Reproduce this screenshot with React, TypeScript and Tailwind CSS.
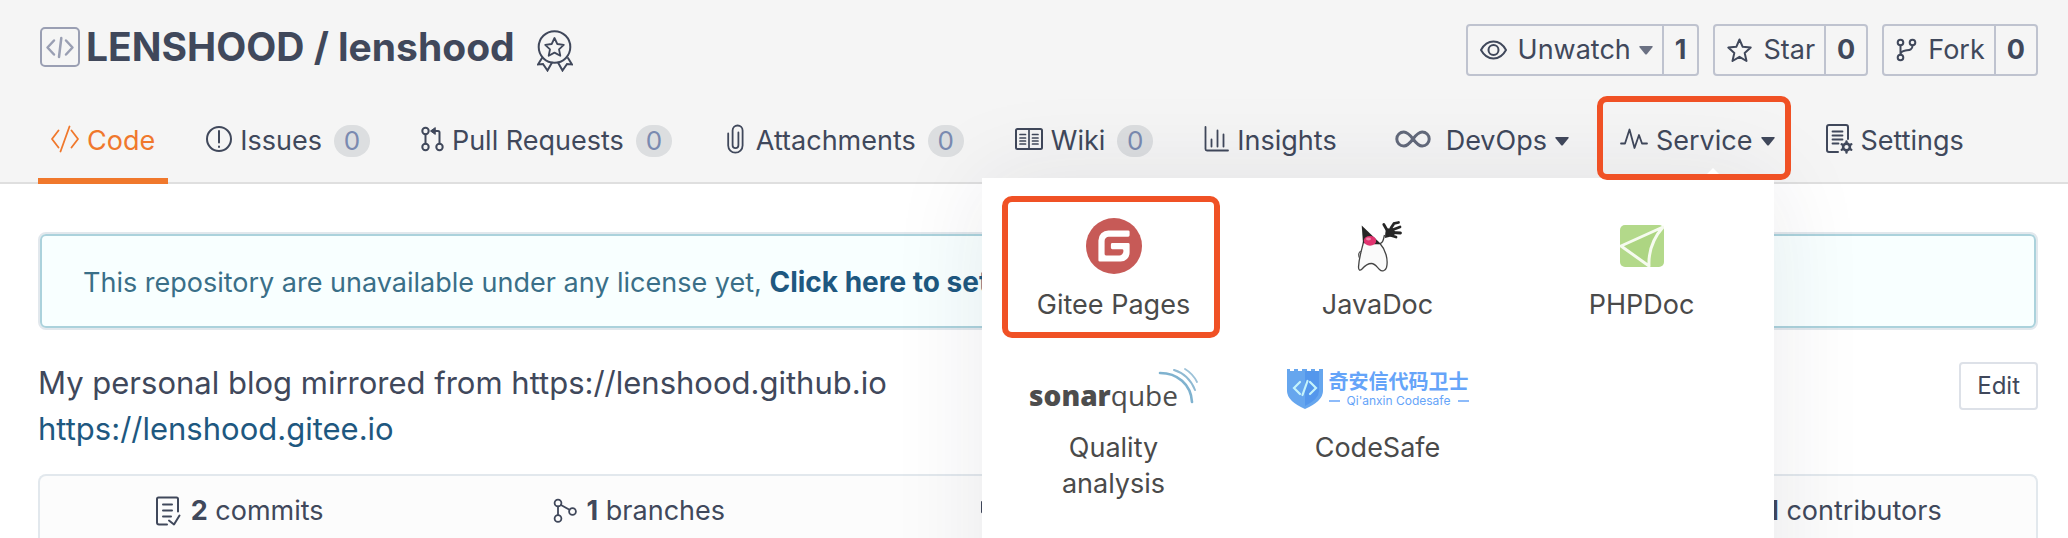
import type { ReactNode } from "react";

type DrawingProps = {
  w: number;
  h: number;
  stroke?: number;
  className?: string;
  children: ReactNode;
};

function Drawing({ w, h, stroke = 2, className = "", children }: DrawingProps) {
  return (
    <svg
      width={w}
      height={h}
      viewBox={`0 0 ${w} ${h}`}
      fill="none"
      stroke="currentColor"
      strokeWidth={stroke}
      strokeLinecap="round"
      strokeLinejoin="round"
      aria-hidden="true"
      className={`shrink-0 ${className}`}
    >
      {children}
    </svg>
  );
}

const RepoIcon = () => (
  <Drawing w={40} h={40} className="text-[#9a9fb3]">
    <rect x="1" y="1" width="38" height="38" rx="4" />
    <path d="M14 13.5 7.500 20.500l6.500 7M26 13.500l6.500 7-6.500 7" strokeWidth="2.500" />
    <path d="M21.300 11 19 30" strokeWidth="2.500" />
  </Drawing>
);

const MedalIcon = () => (
  <Drawing w={36} h={42} stroke={2}>
    <circle cx="17.500" cy="17" r="15.800" />
    <path d="m17.500 8 2.800 6 6.500.8-4.800 4.500 1.300 6.500-5.800-3.200-5.800 3.200 1.300-6.500-4.800-4.500 6.500-.8Z" strokeWidth="1.800" />
    <path d="m5 28-4 6.500 5-.5 4.500 6.500 4.500-8M31 28l4 6.500-5-.5-4.500 6.500-4.500-8" strokeLinejoin="miter" />
  </Drawing>
);

const CodeIcon = () => (
  <Drawing w={28} h={28} stroke={1.8}>
    <path d="M7.500 5.500 1 14l6.500 8.500M20.500 5.500 27 14l-6.500 8.500M18.500 1.500 9.500 26.500" />
  </Drawing>
);

const IssueIcon = () => (
  <Drawing w={26} h={28}>
    <circle cx="13" cy="14" r="12" />
    <path d="M13 6v11.500" />
    <path d="M13 21.500v.5" />
  </Drawing>
);

const PullIcon = () => (
  <Drawing w={23} h={26}>
    <circle cx="4.500" cy="5" r="3.200" />
    <circle cx="4.500" cy="21" r="3.200" />
    <circle cx="18.500" cy="21" r="3.200" />
    <path d="M4.500 8.500v9M18.500 17.500V6.500q0-1.500-1.500-1.500H11" />
    <path d="m14 1.800-4.500 3.200 4.500 3.200Z" fill="currentColor" strokeWidth="1" />
  </Drawing>
);

const ClipIcon = () => (
  <Drawing w={17} h={30} stroke={1.8} className="mx-1">
    <path d="M1.200 9.500v12a7.200 7.200 0 0 0 14.400 0V6.500a5 5 0 0 0-10 0v14.800a2.900 2.900 0 0 0 5.800 0V8.500" />
  </Drawing>
);

const WikiIcon = () => (
  <Drawing w={28} h={22} stroke={2}>
    <rect x="1" y="1" width="26" height="20" rx="1.500" />
    <path d="M14 1.500v19M5 6.500h5.500M5 10h5.500M5 13h5.500M5 16h5.500M17.500 6.500H23M17.500 10H23M17.500 13H23M17.500 16H23" strokeWidth="1.700" />
  </Drawing>
);

const InsightsIcon = () => (
  <Drawing w={25} h={26} stroke={1.8}>
    <path d="M1.500 1v22q0 1.500 1.500 1.500h21M7.500 13.500v7M13.500 4.500v16M19.500 8.500v12" />
  </Drawing>
);

const InfinityIcon = () => (
  <Drawing w={36} h={18} stroke={3} className="mx-[7px] text-[#636a7b]">
    <path d="M18 9C15 5 12.500 2 8.800 2a7 7 0 0 0 0 14c3.700 0 6.200-3 9.200-7s5.500-7 9.200-7a7 7 0 0 1 0 14C23.500 16 21 13 18 9Z" />
  </Drawing>
);

const PulseIcon = () => (
  <Drawing w={28} h={22} stroke={1.8}>
    <path d="M1 15.500h4L9.500 1.500l5 18.500L19 7l3 8.500h5" />
  </Drawing>
);

const SettingsIcon = () => (
  <Drawing w={27} h={30} stroke={2}>
    <path d="M12 28H3q-2 0-2-2V3q0-2 2-2h17q2 0 2 2v12" />
    <path d="M6.500 7.500h10M6.500 11.500h10M6.500 15.500h10M6.500 19.500h6" strokeWidth="1.800" />
    <circle cx="20.500" cy="23" r="3.400" strokeWidth="2.600" />
    <path d="M20.500 17.500v1.500M20.500 27v1.500M15.700 20.300l1.500.8M23.800 24.900l1.500.8M15.700 25.700l1.500-.8M23.800 21.100l1.500-.8" strokeWidth="2.400" />
  </Drawing>
);

const EyeIcon = () => (
  <Drawing w={27} h={20}>
    <path d="M1 10C4 4.500 8.500 1.500 13.500 1.500S23 4.500 26 10c-3 5.500-7.500 8.500-12.500 8.500S4 15.500 1 10Z" />
    <circle cx="13.500" cy="10" r="5" />
  </Drawing>
);

const StarIcon = () => (
  <Drawing w={25} h={25}>
    <path d="m12.500 1.500 3.200 7.300 8 .8-6 5.400 1.800 8-7-4.200-7 4.200 1.800-8-6-5.400 8-.8Z" />
  </Drawing>
);

const ForkIcon = () => (
  <Drawing w={21} h={24}>
    <circle cx="4.500" cy="4.500" r="2.800" />
    <circle cx="4.500" cy="19.500" r="2.800" />
    <circle cx="16.500" cy="4.500" r="2.800" />
    <path d="M4.500 7.500v9M16.500 7.500c0 5-4 4.500-7 5s-5 1.500-5 4" />
  </Drawing>
);

const CommitsIcon = () => (
  <Drawing w={25} h={30}>
    <path d="M11 28.500H3q-2 0-2-2V3q0-1.500 1.500-1.500h18Q22 1.500 22 3v12.500" />
    <path d="M7 8.500h9M7 14.500h9M7 20.500h8" />
    <path d="m13 24.500 5 4 5.500-9" />
  </Drawing>
);

const BranchesIcon = () => (
  <Drawing w={24} h={26} stroke={1.8}>
    <circle cx="5" cy="5" r="3.400" />
    <circle cx="5" cy="20.500" r="3.400" />
    <circle cx="19.500" cy="13.500" r="3.400" />
    <path d="M5 8.500v8.500M8 7l8.500 4.800" />
  </Drawing>
);

const TagIcon = () => (
  <Drawing w={24} h={24}>
    <path d="M1 3v10l11 10 10-10L12 3Z" />
    <circle cx="7" cy="8" r="2" />
  </Drawing>
);

const PeopleIcon = () => (
  <Drawing w={26} h={24}>
    <circle cx="13" cy="7" r="5" />
    <path d="M2 23c0-6 5-9 11-9s11 3 11 9" />
  </Drawing>
);

function Caret({ className = "" }: { className?: string }) {
  return (
    <svg width="14" height="9" viewBox="0 0 14 9" aria-hidden="true" className={`shrink-0 ${className}`}>
      <path d="M1 0h12q1.200.3.500 1.300L7.800 8.200q-.8.700-1.600 0L.5 1.300Q-.2.300 1 0Z" fill="currentColor" />
    </svg>
  );
}

const GiteeLogo = () => (
  <svg width="56" height="56" viewBox="0 0 56 56" aria-hidden="true">
    <circle cx="28" cy="28" r="28" fill="#c75a57" />
    <path
      fill="#fff"
      d="M42.200 12.400H22.400a10 10 0 0 0-10 10v19.800q0 1.400 1.400 1.400h20.800a9 9 0 0 0 9-9v-8.200q0-1.400-1.400-1.400H26.300q-1.400 0-1.400 1.400v3.400q0 1.400 1.400 1.400h9.700q1.400 0 1.400 1.400v.7a4.200 4.200 0 0 1-4.200 4.200H20q-1.400 0-1.400-1.400V22.900a4.200 4.200 0 0 1 4.200-4.200h19.400q1.400 0 1.400-1.400v-3.500q0-1.400-1.400-1.400Z"
    />
  </svg>
);

const DukeLogo = () => (
  <svg width="48" height="52" viewBox="0 0 48 52" aria-hidden="true">
    <path d="M9.500 22C8 29 5 37 4.500 47c0 3.500 1.500 4 3.500 2 3-3.500 6-5.500 9.500-5.500s5 3 8 6c2.500 2.500 6 1.500 7-2 2-8-1-18-6.500-24Z" fill="#fafafa" stroke="#444" strokeWidth="1.300" />
    <path d="M7.700 5.500 27 24q-9 1-18-1Z" fill="#262626" />
    <path d="M7.500 31c-3 .5-3.500 4-2 7" fill="none" stroke="#555" strokeWidth="1.200" />
    <path d="M26.500 23c2 0 2.500-2 3-4l1-4" fill="none" stroke="#444" strokeWidth="1.300" />
    <ellipse cx="16" cy="20.800" rx="6.200" ry="4.900" fill="#e0336f" />
    <ellipse cx="14.500" cy="19" rx="2.500" ry="1.400" fill="#f283a8" />
    <path
      d="M33 10 29.800 4.500M37 8l3-4.500 4.500-1M38 10l8-3M38 12.500l8.500.5M37 15.500l5 1.500"
      fill="none"
      stroke="#262626"
      strokeWidth="2.800"
      strokeLinecap="round"
    />
    <path d="M32 9q5-2 8 1t-1 6q-4 1-8 2 0-5 1-9Z" fill="#262626" />
  </svg>
);

const PhpDocLogo = () => (
  <svg width="44" height="42" viewBox="0 0 44 42" aria-hidden="true">
    <rect width="44" height="42" rx="5" fill="#b3d98a" />
    <path d="M43 2 1 21l28 20q-1-22 14-39Z" fill="#add582" stroke="#f6fbef" strokeWidth="3" strokeLinejoin="round" />
  </svg>
);

const SonarLogo = () => (
  <span className="relative flex items-center pr-5 text-[#4d4d4d]">
    <span className="pt-3 font-['Open_Sans',sans-serif] text-[28px] leading-8">
      <b className="font-extrabold">sonar</b>qube
    </span>
    <svg width="40" height="40" viewBox="0 0 40 40" fill="none" strokeLinecap="round" aria-hidden="true" className="absolute right-0 bottom-1">
      <path d="M2 6c17 0 31 11 32 29" stroke="#7fb2cf" strokeWidth="2.600" />
      <path d="M16 3c10 3 17 10 21 20" stroke="#8fb9d2" strokeWidth="2" />
      <path d="M27 2c5 3 9 7 12 13" stroke="#9dc2d8" strokeWidth="1.800" />
    </svg>
  </span>
);

const CodeSafeLogo = () => (
  <span className="flex items-center gap-[6px] text-[#65a4f9]">
    <svg width="36" height="40" viewBox="0 0 36 40" aria-hidden="true">
      <path d="M0 0h3v2h4V0h4v2h4V0h5v2h4V0h4v2h4V0h4v22q0 10-18 18Q0 32 0 22Z" fill="#66a6ee" />
      <path d="M18 2h14v20q0 8-14 15Z" fill="#5497ec" />
      <path d="m13 13-6 6 6 6M23 13l6 6-6 6M20.500 12l-5 14" fill="none" stroke="#c5f3fb" strokeWidth="2.200" strokeLinecap="round" />
    </svg>
    <span className="flex flex-col">
      <span className="font-['Noto_Sans_CJK_SC',sans-serif] text-[20px] font-bold leading-6">奇安信代码卫士</span>
      <span className="flex items-center justify-between text-[12px] leading-4">
        <span className="h-[2px] w-[11px] bg-[#8dbbfa]" />
        Qi'anxin Codesafe
        <span className="h-[2px] w-[11px] bg-[#8dbbfa]" />
      </span>
    </span>
  </span>
);

function CountButton({ icon, label, count, caret }: { icon: ReactNode; label: string; count: number; caret?: boolean }) {
  return (
    <div className="flex h-[52px] rounded-[4px] border-2 border-[#bfc3cf] text-[27px] leading-9">
      <button type="button" className="flex items-center gap-[11px] pr-[9px] pl-3">
        {icon}
        <span className="flex items-center gap-2">
          {label}
          {caret && <Caret className="text-[#6b7183]" />}
        </span>
      </button>
      <a href="#count" className="flex items-center border-l-2 border-[#bfc3cf] px-[11px] font-bold">
        {count}
      </a>
    </div>
  );
}

type TabProps = { icon: ReactNode; label: string; count?: number; caret?: boolean; active?: boolean };

function TabLink({ icon, label, count, caret, active }: TabProps) {
  const tone = active ? "border-[#f0782c] text-[#f0782c]" : "border-transparent";
  return (
    <a href={`#${label}`} className={`flex border-b-[6px] px-[13px] pt-[27px] pb-[19px] ${tone}`}>
      <span className="flex h-9 items-center gap-2 whitespace-nowrap">
        <span className="-mt-1">{icon}</span>
        {label}
        {caret && <Caret />}
        {count !== undefined && (
          <span className="ml-1 flex h-8 w-9 items-center justify-center rounded-full bg-[#dcdee0] text-[26px] text-[#7a8ab0]">
            {count}
          </span>
        )}
      </span>
    </a>
  );
}

function Service({ logo, label, marked }: { logo: ReactNode; label: string; marked?: boolean }) {
  return (
    <a href={`#${label}`} className="relative flex flex-col items-center gap-[13px] px-10 text-center">
      <span className="flex h-14 items-center justify-center">{logo}</span>
      <span>{label}</span>
      {marked && <span className="absolute -top-[22px] right-[26px] -bottom-[15px] left-5 rounded-[10px] border-[6px] border-[#f05125]" />}
    </a>
  );
}

function ServiceMenu() {
  return (
    <div className="absolute top-full right-[14px] grid h-[480px] w-[792px] grid-cols-3 content-start gap-y-[38px] bg-white pt-10 text-[27px] leading-9 text-[#4a4a4a] shadow-[0_0_90px_rgba(30,34,60,0.09)]">
      <Service logo={<GiteeLogo />} label="Gitee Pages" marked />
      <Service logo={<DukeLogo />} label="JavaDoc" />
      <Service logo={<PhpDocLogo />} label="PHPDoc" />
      <Service logo={<SonarLogo />} label="Quality analysis" />
      <Service logo={<CodeSafeLogo />} label="CodeSafe" />
    </div>
  );
}

function Stat({ icon, count, label }: { icon: ReactNode; count: number; label: string }) {
  return (
    <a href={`#${label}`} className="flex flex-1 items-center justify-center gap-[10px]">
      {icon}
      <span>
        <b className="font-bold">{count}</b> {label}
      </span>
    </a>
  );
}

export default function App() {
  return (
    <div className="min-h-screen overflow-hidden bg-white font-['Inter','Noto_Sans_CJK_SC',sans-serif] text-[27px] leading-9 text-[#40485b]">
      <header className="border-b-2 border-[#dfdfdf] bg-[#f5f5f5] pt-6 pr-[30px] pl-[38px]">
        <div className="flex h-[52px] items-center justify-between">
          <div className="flex items-center gap-[6px] pb-[6px] pl-[2px]">
            <RepoIcon />
            <h1 className="text-[39px] leading-[48px] font-bold whitespace-nowrap">LENSHOOD / lenshood</h1>
            <span className="mt-2 ml-4">
              <MedalIcon />
            </span>
          </div>
          <div className="flex gap-[14px]">
            <CountButton icon={<EyeIcon />} label="Unwatch" count={1} caret />
            <CountButton icon={<StarIcon />} label="Star" count={0} />
            <CountButton icon={<ForkIcon />} label="Fork" count={0} />
          </div>
        </div>
        <nav className="mt-5 -mb-[2px] flex gap-[25px]">
          <TabLink icon={<CodeIcon />} label="Code" active />
          <TabLink icon={<IssueIcon />} label="Issues" count={0} />
          <TabLink icon={<PullIcon />} label="Pull Requests" count={0} />
          <TabLink icon={<ClipIcon />} label="Attachments" count={0} />
          <TabLink icon={<WikiIcon />} label="Wiki" count={0} />
          <TabLink icon={<InsightsIcon />} label="Insights" />
          <TabLink icon={<InfinityIcon />} label="DevOps" caret />
          <div className="relative z-10">
            <TabLink icon={<PulseIcon />} label="Service" caret />
            <div className="absolute inset-x-0 top-0 bottom-[6px]">
              <ServiceMenu />
              <span className="absolute bottom-0 left-[53%] border-x-[10px] border-b-[10px] border-x-transparent border-b-white" />
              <span className="absolute top-0 -right-[3px] -bottom-[2px] -left-[10px] rounded-[10px] border-[6px] border-[#f05125]" />
            </div>
          </div>
          <TabLink icon={<SettingsIcon />} label="Settings" />
        </nav>
      </header>

      <main className="pr-[30px] pl-[38px]">
        <div className="mt-12 rounded-lg border-2 border-[#e2e8ed] text-[#3a6f88]">
          <p className="rounded-md border-2 border-[#abd2dc] bg-[#f8ffff] px-[41px] pt-[27px] pb-6 leading-[38px]">
            This repository are unavailable under any license yet,{" "}
            <a href="#license" className="text-[28px] font-bold text-[#1e5880]">
              Click here to set
            </a>
          </p>
        </div>

        <div className="mt-[30px] flex items-start justify-between">
          <div className="text-[31px] leading-[46px]">
            <p>My personal blog mirrored from https://lenshood.github.io</p>
            <a href="https://lenshood.gitee.io" className="text-[#1e5880]">
              https://lenshood.gitee.io
            </a>
          </div>
          <button type="button" className="mt-[2px] h-12 rounded-[4px] border-2 border-[#dde1e8] bg-white px-4 text-[24px] leading-8">
            Edit
          </button>
        </div>

        <div className="mt-[22px] flex h-16 rounded-t-lg border-2 border-b-0 border-[#e2e8ed] bg-[#fcfcfc] pt-2">
          <Stat icon={<CommitsIcon />} count={2} label="commits" />
          <Stat icon={<BranchesIcon />} count={1} label="branches" />
          <Stat icon={<TagIcon />} count={0} label="tags" />
          <Stat icon={<TagIcon />} count={0} label="releases" />
          <Stat icon={<PeopleIcon />} count={1} label="contributors" />
        </div>
      </main>
    </div>
  );
}
